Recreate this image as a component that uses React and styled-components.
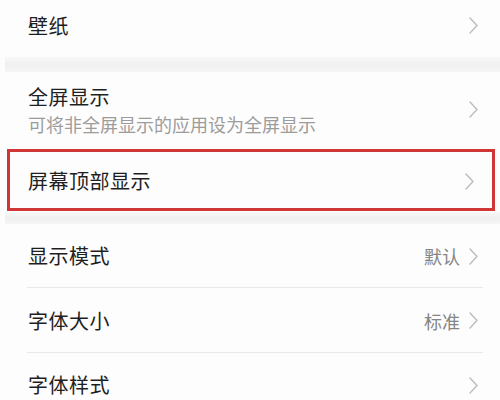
import React from "react";
import styled, { createGlobalStyle } from "styled-components";

const Global = createGlobalStyle`
  html, body { margin: 0; padding: 0; background: #fdfdfd; }
  body { font-family: "Noto Sans CJK SC", "Noto Sans", sans-serif; overflow: hidden; }
`;

const Page = styled.div`
  width: 500px;
  height: 400px;
  display: flex;
  flex-direction: column;
  background: #fdfdfd;
  overflow: hidden;
`;

const Group = styled.div`
  display: flex;
  flex-direction: column;
  background: #fdfdfd;
`;

const Band = styled.div`
  height: ${(p) => p.$h}px;
  margin-left: 5px;
  background: linear-gradient(#f7f7f7, #f0f0f0 50%, #f5f5f5);
  flex-shrink: 0;
`;

const Row = styled.div`
  position: relative;
  display: flex;
  align-items: center;
  justify-content: space-between;
  box-sizing: border-box;
  height: ${(p) => p.$h}px;
  padding: 0 22px ${(p) => p.$pb || 0}px 28px;
  flex-shrink: 0;
  ${(p) =>
    p.$divider &&
    `&::after {
      content: "";
      position: absolute;
      left: 27px;
      right: 17px;
      bottom: 0;
      height: 1px;
      background: #e9e9e9;
    }`}
`;

const Highlight = styled.div`
  display: flex;
  align-items: center;
  justify-content: space-between;
  box-sizing: border-box;
  height: 62px;
  margin: 2px 5px 1px 7px;
  padding: 2px 18px 0 18px;
  border: 3px solid #d03636;
  flex-shrink: 0;
`;

const TextBlock = styled.div`
  display: flex;
  flex-direction: column;
  gap: 2px;
`;

const Title = styled.div`
  font-size: 20px;
  line-height: 26px;
  color: #1f1f1f;
  letter-spacing: 0.5px;
`;

const Sub = styled.div`
  font-size: 18px;
  line-height: 24px;
  color: #9c9c9c;
`;

const Right = styled.div`
  display: flex;
  align-items: center;
  gap: 9px;
`;

const Value = styled.span`
  font-size: 18px;
  color: #858585;
`;

const Chevron = () => (
  <svg width="9" height="17" viewBox="0 0 9 17">
    <polyline
      points="1,1 8,8.5 1,16"
      fill="none"
      stroke="#bcbcbc"
      strokeWidth="1.4"
      strokeLinejoin="round"
      strokeLinecap="round"
    />
  </svg>
);

const Trail = ({ value }) => (
  <Right>
    {value && <Value>{value}</Value>}
    <Chevron />
  </Right>
);

export default function App() {
  return (
    <Page>
      <Global />
      <Group>
        <Row $h={57} $pb={6}>
          <Title>壁纸</Title>
          <Trail />
        </Row>
      </Group>
      <Band $h={15} />
      <Group>
        <Row $h={75}>
          <TextBlock>
            <Title>全屏显示</Title>
            <Sub>可将非全屏显示的应用设为全屏显示</Sub>
          </TextBlock>
          <Trail />
        </Row>
        <Highlight>
          <Title>屏幕顶部显示</Title>
          <Trail />
        </Highlight>
      </Group>
      <Band $h={12} />
      <Group>
        <Row $h={64} $divider>
          <Title>显示模式</Title>
          <Trail value="默认" />
        </Row>
        <Row $h={65} $divider>
          <Title>字体大小</Title>
          <Trail value="标准" />
        </Row>
        <Row $h={64}>
          <Title>字体样式</Title>
          <Trail />
        </Row>
      </Group>
    </Page>
  );
}
